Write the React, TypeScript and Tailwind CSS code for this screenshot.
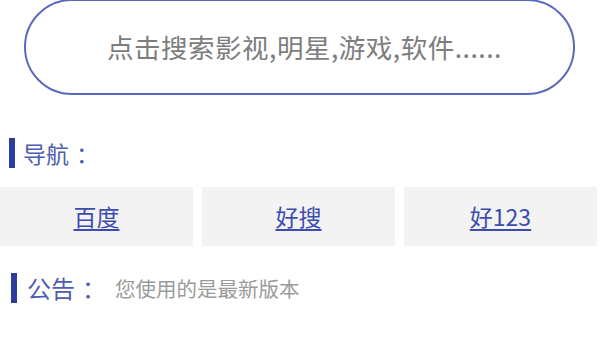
const links = ["百度", "好搜", "好123"];

const App = () => {
  return (
    <div
      className="w-[612px] h-[344px] overflow-hidden bg-white"
      style={{ fontFamily: '"Noto Sans CJK SC", Roboto, sans-serif' }}
    >
      {/* search box */}
      <div className="ml-[24px] mt-[-1px] w-[551px] h-[96px] rounded-full border-2 border-[#5b69bd] flex items-center justify-center">
        <span className="pl-[10px] text-[26.5px] text-[#7d7d7d] tracking-[0.5px]">
          点击搜索影视,明星,游戏,软件......
        </span>
      </div>

      {/* nav title */}
      <div className="mt-[43px] flex items-center">
        <span className="ml-[9px] w-[6px] h-[30px] bg-[#2c3c9f]" />
        <span className="ml-[8px] text-[23px] leading-none text-[#4e5db2]">
          导航<span className="ml-[7px]">：</span>
        </span>
      </div>

      {/* nav links */}
      <div className="mt-[19px] flex gap-[9px]">
        {links.map((l) => (
          <div
            key={l}
            className="w-[193px] h-[59px] bg-[#f3f3f4] flex items-center justify-center"
          >
            <a href="#" className="text-[23px] text-[#3b4cae] underline underline-offset-[3px]">
              {l}
            </a>
          </div>
        ))}
      </div>

      {/* notice */}
      <div className="mt-[27px] flex items-center">
        <span className="ml-[11px] w-[6px] h-[30px] bg-[#2c3c9f]" />
        <span className="ml-[10px] text-[24px] leading-none text-[#4e5db2]">
          公告<span className="ml-[7px]">：</span>
        </span>
        <span className="ml-[9px] text-[20.5px] leading-none text-[#9a9a9a]">您使用的是最新版本</span>
      </div>
    </div>
  );
};

export default App;
